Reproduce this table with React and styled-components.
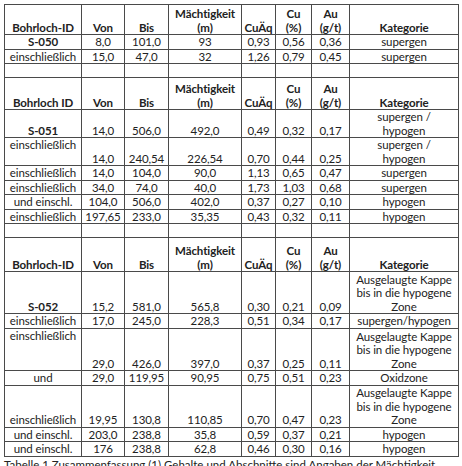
import React from 'react';
import styled, { createGlobalStyle } from 'styled-components';

const GlobalStyle = createGlobalStyle`
  html, body {
    margin: 0;
    padding: 0;
    background: #ffffff;
    overflow: hidden;
  }
`;

const WIDTHS = [77, 43, 44, 73, 34, 36, 38, 109];
const UNIT = 14.05;

const sections = [
  {
    id: 'Bohrloch-ID',
    head: 30,
    rows: [
      { lines: 1, cells: ['S-050', '8,0', '101,0', '93', '0,93', '0,56', '0,36', 'supergen'], bold: true },
      { lines: 1, cells: ['einschließlich', '15,0', '47,0', '32', '1,26', '0,79', '0,45', 'supergen'] },
      { lines: 1, cells: ['', '', '', '', '', '', '', ''] },
    ],
  },
  {
    id: 'Bohrloch ID',
    head: 32,
    rows: [
      { lines: 2, cells: ['S-051', '14,0', '506,0', '492,0', '0,49', '0,32', '0,17', 'supergen /\nhypogen'], bold: true },
      { lines: 2, cells: ['einschließlich', '14,0', '240,54', '226,54', '0,70', '0,44', '0,25', 'supergen /\nhypogen'], top: true },
      { lines: 1, cells: ['einschließlich', '14,0', '104,0', '90,0', '1,13', '0,65', '0,47', 'supergen'] },
      { lines: 1, cells: ['einschließlich', '34,0', '74,0', '40,0', '1,73', '1,03', '0,68', 'supergen'] },
      { lines: 1, cells: ['und einschl.', '104,0', '506,0', '402,0', '0,37', '0,27', '0,10', 'hypogen'] },
      { lines: 1, cells: ['einschließlich', '197,65', '233,0', '35,35', '0,43', '0,32', '0,11', 'hypogen'] },
      { lines: 1, cells: ['', '', '', '', '', '', '', ''] },
    ],
  },
  {
    id: 'Bohrloch-ID',
    head: 34,
    rows: [
      { lines: 3, cells: ['S-052', '15,2', '581,0', '565,8', '0,30', '0,21', '0,09', 'Ausgelaugte Kappe\nbis in die hypogene\nZone'], bold: true },
      { lines: 1, cells: ['einschließlich', '17,0', '245,0', '228,3', '0,51', '0,34', '0,17', 'supergen/hypogen'] },
      { lines: 3, cells: ['einschließlich', '29,0', '426,0', '397,0', '0,37', '0,25', '0,11', 'Ausgelaugte Kappe\nbis in die hypogene\nZone'], top: true },
      { lines: 1, cells: ['und', '29,0', '119,95', '90,95', '0,75', '0,51', '0,23', 'Oxidzone'] },
      { lines: 3, cells: ['einschließlich', '19,95', '130,8', '110,85', '0,70', '0,47', '0,23', 'Ausgelaugte Kappe\nbis in die hypogene\nZone'] },
      { lines: 1, cells: ['und einschl.', '203,0', '238,8', '35,8', '0,59', '0,37', '0,21', 'hypogen'] },
      { lines: 1, cells: ['und einschl.', '176', '238,8', '62,8', '0,46', '0,30', '0,16', 'hypogen'] },
    ],
  },
];

const App = () => {
  return (
    <Page>
      <GlobalStyle />
      <Table>
        <colgroup>
          {WIDTHS.map((w, i) => (
            <col key={i} style={{ width: w }} />
          ))}
        </colgroup>
        <tbody>
          {sections.map((sec, s) => (
            <React.Fragment key={s}>
              <HeadRow $h={sec.head}>
                <Th>{sec.id}</Th>
                <Th>Von</Th>
                <Th>Bis</Th>
                <Th>
                  Mächtigkeit
                  <br />
                  (m)
                </Th>
                <Th>CuÄq</Th>
                <Th>
                  Cu
                  <br />
                  (%)
                </Th>
                <Th>
                  Au
                  <br />
                  (g/t)
                </Th>
                <Th>Kategorie</Th>
              </HeadRow>
              {sec.rows.map((row, r) => (
                <tr key={r}>
                  {row.cells.map((c, i) => (
                    <Td
                      key={i}
                      $lines={row.lines}
                      $bold={row.bold && i === 0}
                      $top={row.top && i === 0}
                    >
                      {c}
                    </Td>
                  ))}
                </tr>
              ))}
            </React.Fragment>
          ))}
        </tbody>
      </Table>
      <Caption>
        Tabelle 1 Zusammenfassung (1) Gehalte und Abschnitte sind Angaben der Mächtigkeit
      </Caption>
    </Page>
  );
};

const Page = styled.div`
  padding: 4px 0 0 4px;
  font-family: Lato, 'Liberation Sans', sans-serif;
  color: #222;
`;

const Table = styled.table`
  border-collapse: collapse;
  table-layout: fixed;
  width: 455px;
  font-size: 11.5px;
  letter-spacing: -0.1px;
`;

const HeadRow = styled.tr`
  height: ${(p) => p.$h}px;
`;

const Th = styled.th`
  border: 1px solid #4a4a4a;
  padding: 0;
  line-height: 13.5px;
  font-weight: 700;
  text-align: center;
  vertical-align: bottom;
  white-space: nowrap;
  overflow: hidden;
`;

const Td = styled.td`
  border: 1px solid #4a4a4a;
  padding: 0;
  height: ${(p) => p.$lines * UNIT - 1}px;
  line-height: 13.5px;
  text-align: center;
  vertical-align: ${(p) => (p.$top ? 'top' : 'bottom')};
  font-weight: ${(p) => (p.$bold ? 700 : 400)};
  white-space: pre-line;
  overflow: hidden;
`;

const Caption = styled.p`
  margin: 1px 0 0 0;
  font-size: 11.5px;
  line-height: 13px;
  white-space: nowrap;
`;

export default App;
